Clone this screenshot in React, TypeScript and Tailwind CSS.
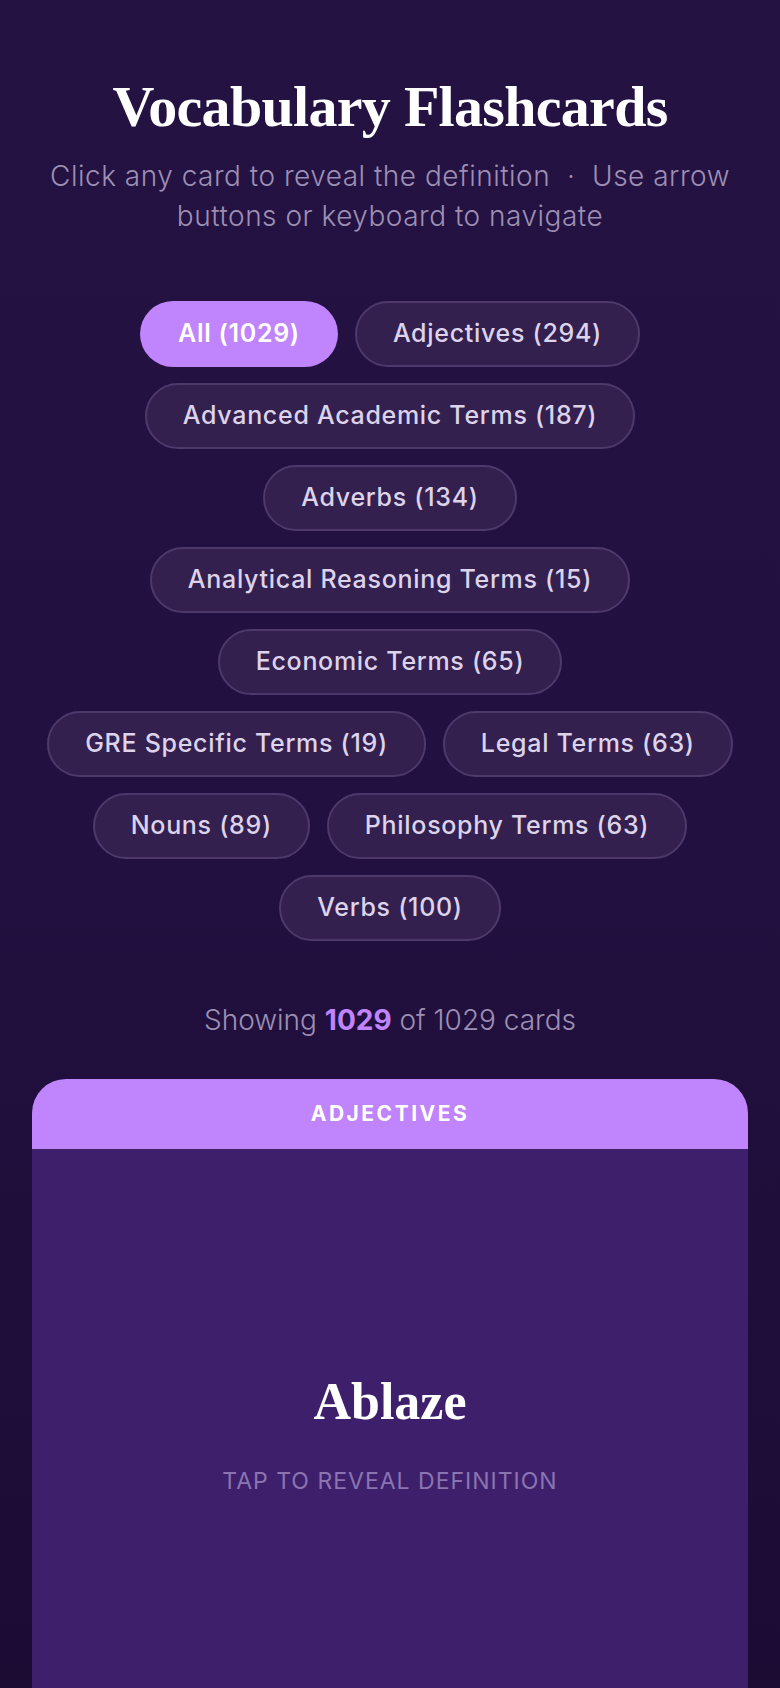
import React from "react";

const categories = [
  { name: "All", count: 1029 },
  { name: "Adjectives", count: 294 },
  { name: "Advanced Academic Terms", count: 187 },
  { name: "Adverbs", count: 134 },
  { name: "Analytical Reasoning Terms", count: 15 },
  { name: "Economic Terms", count: 65 },
  { name: "GRE Specific Terms", count: 19 },
  { name: "Legal Terms", count: 63 },
  { name: "Nouns", count: 89 },
  { name: "Philosophy Terms", count: 63 },
  { name: "Verbs", count: 100 },
];

const sans = "font-['Inter','Noto_Sans',sans-serif]";
const serif = "font-['Liberation_Serif','DejaVu_Serif',serif]";

function Pill({ label, active }: { label: string; active?: boolean }) {
  return (
    <button
      className={
        active
          ? "h-[66px] rounded-full bg-[#c084fc] px-[38px] text-[25px] font-semibold tracking-[0.7px] text-white"
          : "h-[66px] rounded-full border-2 border-[#4d3a6b] bg-[#33204f] px-[36px] text-[25px] font-medium tracking-[0.7px] text-[#ddd3ea]"
      }
    >
      {label}
    </button>
  );
}

export default function App() {
  const current = { category: "Adjectives", word: "Ablaze" };

  return (
    <div
      className={`h-[1688px] w-full overflow-hidden bg-gradient-to-b from-[#241243] via-[#221040] to-[#1c0c34] px-8 pt-[72px] ${sans}`}
    >
      <h1
        className={`text-center text-[58px] font-bold leading-[70px] tracking-[-0.7px] text-white ${serif}`}
      >
        Vocabulary Flashcards
      </h1>
      <p className="mx-auto mt-[14px] max-w-[716px] text-center text-[28px] font-light leading-[40px] tracking-[0.5px] text-[#9d8fb3]">
        Click any card to reveal the definition&nbsp; · &nbsp;Use arrow
        buttons or keyboard to navigate
      </p>

      <div className="mt-[65px] flex flex-wrap justify-center gap-x-[17px] gap-y-[16px]">
        {categories.map((c, i) => (
          <Pill key={c.name} label={`${c.name} (${c.count})`} active={i === 0} />
        ))}
      </div>

      <p className="mt-[58px] text-center text-[28px] font-light text-[#9d8fb3]">
        Showing <span className="font-bold text-[#c084fc]">1029</span> of 1029
        cards
      </p>

      <div className="mt-[38px] overflow-hidden rounded-t-[34px]">
        <div className="flex h-[70px] items-center justify-center bg-[#c084fc] text-[21px] font-bold tracking-[2.5px] text-white">
          {current.category.toUpperCase()}
        </div>
        <div className="flex h-[700px] flex-col items-center bg-[#3d1f6b] pt-[221px]">
          <h2 className={`text-[52px] font-bold leading-[64px] text-white ${serif}`}>
            {current.word}
          </h2>
          <p className="mt-[30px] text-[23px] tracking-[1px] text-[#8b74b1]">
            TAP TO REVEAL DEFINITION
          </p>
        </div>
      </div>
    </div>
  );
}
